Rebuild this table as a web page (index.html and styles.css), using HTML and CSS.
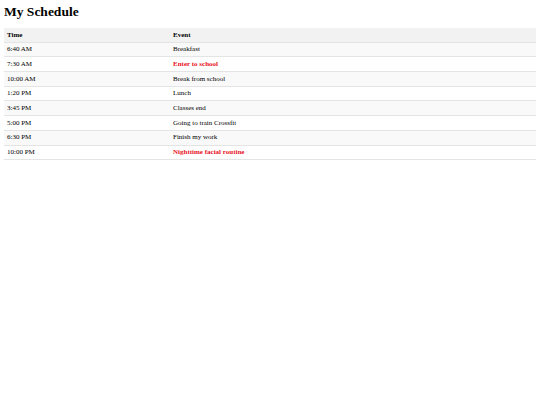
FILE: index.html
```html
<!DOCTYPE html>
<html lang="en">
<head>
    <meta charset="UTF-8">
    <title>My Schedule</title>
    <link rel="stylesheet" href="styles.css">
</head>
<body>
    <h1>My Schedule</h1>
    <table class="schedule">
        <thead>
            <tr>
                <th class="time">Time</th>
                <th>Event</th>
            </tr>
        </thead>
        <tbody>
            <tr><td>6:40 AM</td><td>Breakfast</td></tr>
            <tr><td>7:30 AM</td><td class="important">Enter to school</td></tr>
            <tr><td>10:00 AM</td><td>Break from school</td></tr>
            <tr><td>1:20 PM</td><td>Lunch</td></tr>
            <tr><td>3:45 PM</td><td>Classes end</td></tr>
            <tr><td>5:00 PM</td><td>Going to train Crossfit</td></tr>
            <tr><td>6:30 PM</td><td>Finish my work</td></tr>
            <tr><td>10:00 PM</td><td class="important">Nighttime facial routine</td></tr>
        </tbody>
    </table>
</body>
</html>
```

FILE: styles.css
```css
body {
    margin: 4px;
    font-family: "Liberation Serif", "Times New Roman", serif;
    font-size: 7px;
    color: #000;
    background: #fff;
}

h1 {
    font-size: 13.5px;
    margin: 0 0 8px;
    line-height: 16px;
}

.schedule {
    width: 100%;
    border-collapse: collapse;
}

.schedule th,
.schedule td {
    text-align: left;
    padding: 3.6px 3px 3.1px;
    line-height: 7px;
    border-bottom: 1px solid #e4e4e4;
}

.schedule th {
    background: #f2f2f2;
    font-weight: bold;
}

.schedule .time {
    width: 160px;
}

.schedule tbody tr:nth-child(odd) {
    background: #f9f9f9;
}

.important {
    color: #e8101c;
    font-weight: bold;
}
```
